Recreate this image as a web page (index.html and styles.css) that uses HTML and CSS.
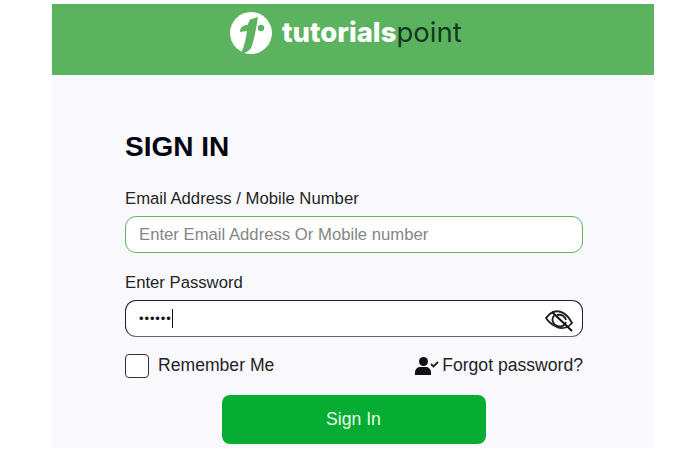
FILE: index.html
```html
<!DOCTYPE html>
<html lang="en">
<head>
  <meta charset="UTF-8">
  <meta name="viewport" content="width=device-width, initial-scale=1.0">
  <title>Sign In</title>
  <link rel="stylesheet" href="styles.css">
</head>
<body>
  <div class="card">
    <!-- Logo bar -->
    <header class="brand">
      <svg class="brand-mark" viewBox="0 0 42 42" width="42" height="42" aria-hidden="true">
        <circle cx="21" cy="21" r="21" fill="#fff"/>
        <path d="M20 7.500L28 5C26.500 14 24.500 27 21.500 35C19.500 39 15 41.500 11 41.500C14 35 16 27 17 19L10 20C10 15 13 13 17.500 13z" fill="#5cb35f"/>
        <circle cx="31" cy="16" r="3.200" fill="#5cb35f"/>
      </svg>
      <span class="brand-name"><b>tutorials</b>point</span>
    </header>

    <!-- Sign in form -->
    <form class="form">
      <h1>SIGN IN</h1>

      <label class="label" for="email">Email Address / Mobile Number</label>
      <div class="field field-email">
        <input type="text" id="email" placeholder="Enter Email Address Or Mobile number">
      </div>

      <label class="label" for="password">Enter Password</label>
      <div class="field field-password">
        <span class="dots">&bull;&bull;&bull;&bull;&bull;&bull;</span><span class="caret"></span>
        <svg class="eye" viewBox="0 0 28 22" width="28" height="22" aria-hidden="true">
          <path d="M1 8C5 2 11 0 16 2c4 1.500 8 5 11 11-4 5-10 6-15 4C7.500 15 3.500 12 1 8z" fill="none" stroke="#222" stroke-width="1.900"/>
          <path d="M9 5.500c-3 4-1 9 3 10.500 4 1.500 8-.5 9-4" fill="none" stroke="#222" stroke-width="1.900"/>
          <path d="M12 5c4-1 8 1 9 5" fill="none" stroke="#222" stroke-width="1.900"/>
          <path d="M7 2l20 19" stroke="#111" stroke-width="2"/>
        </svg>
      </div>

      <div class="options">
        <label class="remember"><span class="box"></span><span class="option-text">Remember Me</span></label>
        <a class="forgot" href="#">
          <svg viewBox="0 0 24 18" width="24" height="18" aria-hidden="true">
            <circle cx="8.500" cy="4.500" r="4.500" fill="#111"/>
            <path d="M0 18v-2.500C0 12 2.500 10 5.500 10h5c3 0 5.500 2 5.500 5.500V18z" fill="#111"/>
            <path d="M16 7l2.500 2.500L23 5" fill="none" stroke="#222" stroke-width="1.800"/>
          </svg>
          <span class="option-text">Forgot password?</span>
        </a>
      </div>

      <button type="button" class="submit">Sign In</button>
    </form>
  </div>
</body>
</html>
```

FILE: styles.css
```css
body {
  font-family: "Liberation Sans", Arial, sans-serif;
  margin: 0;
  padding: 4px 0 0 52px;
  background-color: white;
  color: #242424;
}

.card {
  width: 602px;
  height: 444px;
  background-color: #f9f9fd;
}

.brand {
  height: 71px;
  background-color: #5cb35f;
  display: flex;
  align-items: flex-start;
  padding: 8px 0 0 178px;
  box-sizing: border-box;
  gap: 10px;
}

.brand-mark {
  flex: none;
}

.brand-name {
  font-family: Inter, sans-serif;
  font-size: 27.5px;
  line-height: 38px;
  color: #123a20;
  margin-top: 1px;
}

.brand-name b {
  color: white;
  font-weight: 800;
}

.form {
  display: flex;
  flex-direction: column;
  width: 458px;
  margin-left: 73px;
  padding-top: 55px;
}

h1 {
  font-size: 28px;
  line-height: 34px;
  font-weight: bold;
  color: #050510;
  margin: 0 0 26px;
}

.label {
  font-size: 16.7px;
  line-height: 18px;
  margin-bottom: 8px;
}

.field {
  display: flex;
  align-items: center;
  height: 37px;
  box-sizing: border-box;
  background: white;
  border-radius: 11px;
  padding: 0 13px;
}

.field-email {
  border: 1px solid #5cb85f;
  margin-bottom: 21px;
}

.field-password {
  border: 1px solid #222;
  border-bottom-color: #666;
  margin-bottom: 17px;
}

input {
  flex: 1;
  border: none;
  outline: none;
  padding: 0;
  background: none;
  font: 16.7px "Liberation Sans", Arial, sans-serif;
}

input::placeholder {
  color: #858585;
}

.dots {
  font-size: 13px;
  letter-spacing: 0.9px;
  color: #111;
}

.caret {
  width: 1px;
  height: 19px;
  background: #111;
}

.eye {
  margin-left: auto;
  margin-right: -4px;
  margin-top: 5px;
}

.options {
  display: flex;
  justify-content: space-between;
  align-items: center;
  height: 24px;
  font-size: 17.6px;
  margin-bottom: 17px;
}

.option-text {
  margin-bottom: 2px;
}

.remember {
  display: flex;
  align-items: center;
  gap: 9px;
}

.box {
  width: 24px;
  height: 24px;
  box-sizing: border-box;
  border: 1px solid #333;
  border-radius: 4px;
  background: white;
}

.forgot {
  display: flex;
  align-items: center;
  gap: 3px;
  color: #242424;
  text-decoration: none;
}

.submit {
  align-self: center;
  width: 264px;
  height: 49px;
  margin-left: -1px;
  border: none;
  border-radius: 8px;
  background-color: #07ad33;
  color: #e6fbe9;
  font: 17.6px "Liberation Sans", Arial, sans-serif;
}
```
